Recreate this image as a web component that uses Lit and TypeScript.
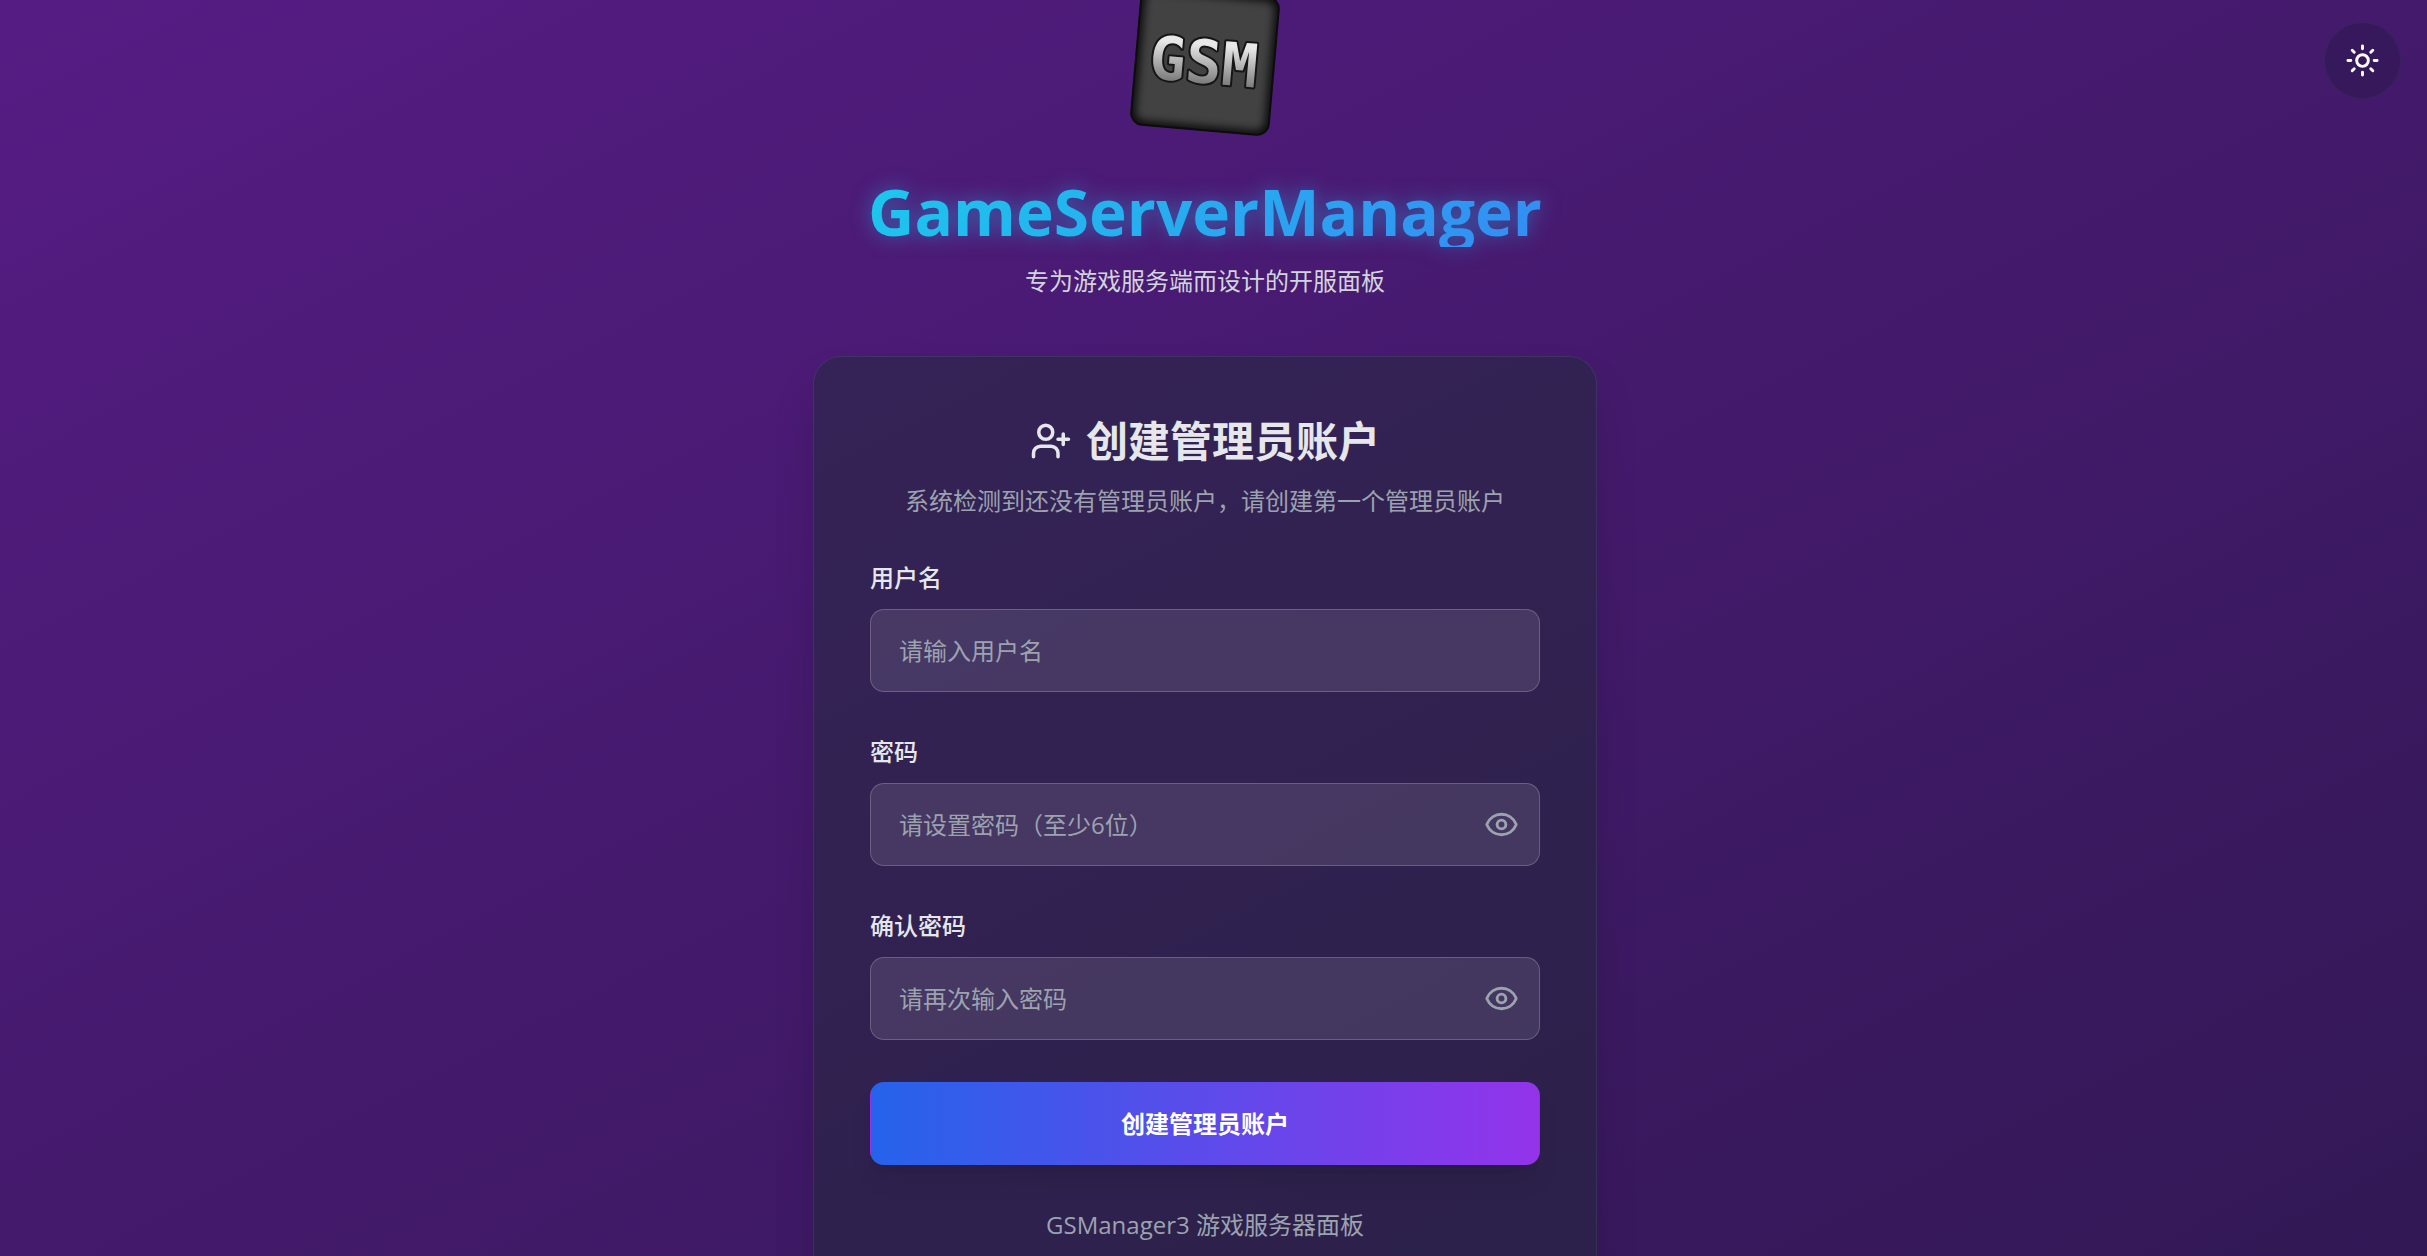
import { LitElement, html, css, svg } from "lit";
import { customElement, property, state } from "lit/decorators.js";

const icon = (name: string, body: unknown) => html`
  <svg class="icon ${name}" viewBox="0 0 24 24" fill="none" stroke="currentColor" stroke-width="2"
    stroke-linecap="round" stroke-linejoin="round" aria-hidden="true">${body}</svg>`;

const sunIcon = icon("sun", svg`
  <circle cx="12" cy="12" r="4"></circle>
  <path d="M12 2v2M12 20v2M4.93 4.93l1.41 1.41M17.66 17.66l1.41 1.41M2 12h2M20 12h2M6.34 17.66l-1.41 1.41M19.07 4.93l-1.41 1.41"></path>`);

const userPlusIcon = icon("user-plus", svg`
  <path d="M16 21v-2a4 4 0 0 0-4-4H6a4 4 0 0 0-4 4v2"></path>
  <circle cx="9" cy="7" r="4"></circle>
  <path d="M19 8v6M22 11h-6"></path>`);

const eyeIcon = icon("eye", svg`
  <path d="M2.06 12.35a1 1 0 0 1 0-.7 10.75 10.75 0 0 1 19.88 0 1 1 0 0 1 0 .7 10.75 10.75 0 0 1-19.88 0"></path>
  <circle cx="12" cy="12" r="3"></circle>`);

@customElement("gsm-logo")
export class GsmLogo extends LitElement {
  static styles = css`
    :host { display: block; width: 140px; height: 140px; transform: rotate(5deg); }
    svg { display: block; width: 100%; height: 100%; }
    .letters {
      font: 700 60px "DejaVu Sans Mono", monospace;
      text-anchor: middle;
      fill: url(#metal);
      stroke: #151515;
      stroke-width: 4px;
      paint-order: stroke;
      stroke-linejoin: round;
    }
  `;

  render() {
    return html`
      <svg viewBox="0 0 140 140" role="img" aria-label="GSM">
        <defs>
          <linearGradient id="metal" x1="0" y1="0" x2="0" y2="1">
            <stop offset="0.25" stop-color="#e8e8e8"></stop>
            <stop offset="0.8" stop-color="#7d7d7d"></stop>
          </linearGradient>
          <filter id="soft" x="-20%" y="-20%" width="140%" height="140%">
            <feGaussianBlur stdDeviation="5"></feGaussianBlur>
          </filter>
          <clipPath id="plate"><rect width="140" height="140" rx="13"></rect></clipPath>
        </defs>
        <g clip-path="url(#plate)">
          <rect width="140" height="140" fill="#424242"></rect>
          <rect width="140" height="140" rx="13" fill="none" stroke="#000" stroke-width="9" filter="url(#soft)"></rect>
        </g>
        <rect x="1" y="1" width="138" height="138" rx="12" fill="none" stroke="#0c0c0c" stroke-width="2"></rect>
        <text class="letters" x="69" y="92">GSM</text>
      </svg>`;
  }
}

@customElement("form-field")
export class FormField extends LitElement {
  @property() label = "";
  @property() placeholder = "";
  @property({ type: Boolean }) secret = false;
  @state() private revealed = false;

  static styles = css`
    :host { display: block; }
    .label {
      display: block;
      margin-bottom: 14px;
      font-weight: 500;
      line-height: 35px;
      color: #e5e7eb;
    }
    .control { display: grid; align-items: center; }
    .input {
      grid-area: 1 / 1;
      box-sizing: border-box;
      width: 100%;
      margin: 0;
      padding: 20px 28px;
      border: 1px solid rgba(255, 255, 255, 0.2);
      border-radius: 14px;
      background: rgba(255, 255, 255, 0.1);
      color: #fff;
      font: inherit;
      line-height: 41px;
      height: 83px;
      outline: none;
    }
    .input:focus { border-color: #60a5fa; }
    .input::placeholder { color: #9ca3af; opacity: 1; }
    .reveal {
      grid-area: 1 / 1;
      justify-self: end;
      display: flex;
      margin-right: 21px;
      padding: 0;
      border: 0;
      background: none;
      color: #9ca3af;
      cursor: pointer;
    }
    .icon { width: 35px; height: 35px; }
  `;

  render() {
    return html`
      <label class="label" for="field">${this.label}</label>
      <div class="control">
        <input class="input" id="field" placeholder=${this.placeholder}
          type=${this.secret && !this.revealed ? "password" : "text"} />
        ${this.secret
          ? html`<button class="reveal" type="button" aria-label="显示密码"
              @click=${() => (this.revealed = !this.revealed)}>${eyeIcon}</button>`
          : null}
      </div>`;
  }
}

@customElement("app-root")
export class AppRoot extends LitElement {
  static styles = css`
    :host {
      display: block;
      font-family: "Open Sans", "Noto Sans CJK SC", sans-serif;
      font-size: 24px;
      line-height: 35px;
    }
    .page {
      position: relative;
      display: flex;
      flex-direction: column;
      align-items: center;
      justify-content: center;
      box-sizing: border-box;
      height: 100vh;
      padding-right: 17px;
      overflow: hidden;
      background: linear-gradient(to bottom right, #561c84, #321855);
    }
    .theme {
      position: absolute;
      top: 22px;
      right: 26px;
      display: flex;
      align-items: center;
      justify-content: center;
      width: 77px;
      height: 77px;
      padding: 0;
      border: 1px solid rgba(55, 65, 81, 0.3);
      border-radius: 50%;
      background: rgba(31, 24, 64, 0.35);
      color: #fff;
      cursor: pointer;
    }
    .sun { width: 35px; height: 35px; }
    .intro {
      display: flex;
      flex-direction: column;
      align-items: center;
      padding-top: 33px;
      margin-bottom: 56px;
    }
    .title {
      margin: 46px 0 14px;
      font-size: 64px;
      font-weight: 700;
      line-height: 70px;
      color: transparent;
      background: linear-gradient(135deg, #1cc8ec, #348cf3);
      background-clip: text;
      -webkit-background-clip: text;
      filter: drop-shadow(0 0 10px rgba(34, 180, 238, 0.5));
    }
    .tagline { margin: 0; line-height: 39px; color: #d1d5db; }
    .card {
      box-sizing: border-box;
      width: 100%;
      max-width: 784px;
      padding: 56px;
      border: 1px solid rgba(55, 75, 81, 0.5);
      border-radius: 28px;
      background: rgba(31, 41, 55, 0.5);
      background-clip: padding-box;
      box-shadow: 0 25px 50px -12px rgba(0, 0, 0, 0.22);
    }
    .heading {
      display: flex;
      align-items: center;
      justify-content: center;
      gap: 14px;
      margin: 0 0 14px;
      font-size: 42px;
      font-weight: 700;
      line-height: 56px;
      color: #e5e7eb;
    }
    .user-plus { width: 42px; height: 42px; }
    .hint { margin: 0 0 42px; text-align: center; color: #9ca3af; }
    .form { display: flex; flex-direction: column; gap: 42px; }
    .submit {
      padding: 20px 28px;
      border: 1px solid transparent;
      border-radius: 14px;
      background: linear-gradient(to right, #2563eb, #9333ea);
      box-shadow: 0 18px 26px -5px rgba(0, 0, 0, 0.1), 0 7px 10px -7px rgba(0, 0, 0, 0.1);
      color: #fff;
      font: inherit;
      font-weight: 700;
      line-height: 41px;
      cursor: pointer;
    }
    .foot { margin: 42px 0 0; text-align: center; color: #9ca3af; }
  `;

  render() {
    return html`
      <main class="page">
        <button class="theme" type="button" aria-label="切换主题">${sunIcon}</button>
        <header class="intro">
          <gsm-logo></gsm-logo>
          <h1 class="title">GameServerManager</h1>
          <p class="tagline">专为游戏服务端而设计的开服面板</p>
        </header>
        <section class="card">
          <h2 class="heading">${userPlusIcon}<span>创建管理员账户</span></h2>
          <p class="hint">系统检测到还没有管理员账户，请创建第一个管理员账户</p>
          <form class="form" @submit=${(e: Event) => e.preventDefault()}>
            <form-field label="用户名" placeholder="请输入用户名"></form-field>
            <form-field label="密码" placeholder="请设置密码（至少6位）" secret></form-field>
            <form-field label="确认密码" placeholder="请再次输入密码" secret></form-field>
            <button class="submit" type="submit">创建管理员账户</button>
          </form>
          <p class="foot">GSManager3 游戏服务器面板</p>
        </section>
      </main>`;
  }
}
